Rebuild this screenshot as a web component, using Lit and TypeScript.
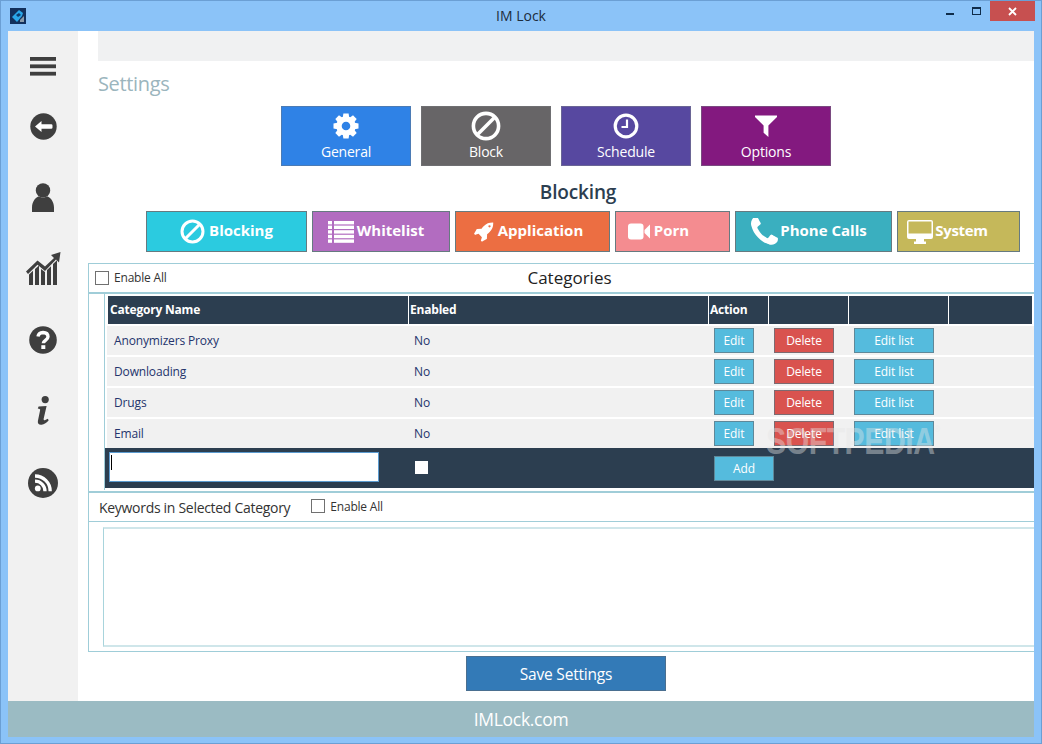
import { LitElement, html, css, svg } from "lit";
import { customElement } from "lit/decorators.js";

const ROCKET = "M1504 448q0-40-28-68t-68-28-68 28-28 68 28 68 68 28 68-28 28-68zm224-288q0 249-75.5 430.5t-253.5 360.5q-81 80-195 176l-20 379q-2 16-16 26l-384 224q-7 4-16 4-12 0-23-9l-64-64q-13-14-8-32l85-276-281-281-276 85q-3 1-9 1-14 0-23-9l-64-64q-17-19-5-39l224-384q10-14 26-16l379-20q96-114 176-195 188-187 358-258t431-71q14 0 24 9.5t10 22.5z";
const PHONE = "M1600 1240q0 27-10 70.5t-21 68.5q-21 50-122 106-94 51-186 51-27 0-53-3.5t-57.5-12.5-47-14.5-55.5-20.5-49-18q-98-35-175-83-127-79-264-216t-216-264q-48-77-83-175-3-9-18-49t-20.5-55.5-14.5-47-12.5-57.5-3.5-53q0-92 51-186 56-101 106-122 25-11 68.5-21t70.5-10q14 0 21 3 18 6 53 76 11 19 30 54t35 63.5 31 53.5q3 4 17.5 25t21.5 35.5 7 28.5q0 20-28.5 50t-62 55-62 53-28.5 46q0 9 5 22.5t8.5 20.5 14 24 11.5 19q76 137 174 235t235 174q2 1 19 11.5t24 14 20.5 8.5 22.5 5q18 0 46-28.5t53-62 55-62 50-28.5q14 0 28.5 7t35.5 21.5 25 17.5q25 15 53.5 31t63.5 35 54 30q70 35 76 53 3 7 3 21z";

const gear = (s: number) => html`<svg width=${s} height=${s} viewBox="0 0 26 26">
  ${[0, 45, 90, 135, 180, 225, 270, 315].map((a) => svg`<path d="M10.4 0.5h5.2l.8 5h-6.8z" fill="#fff" transform="rotate(${a} 13 13)"/>`)}
  <circle cx="13" cy="13" r="7" fill="none" stroke="#fff" stroke-width="5.4"/></svg>`;
const ban = (s: number) => html`<svg width=${s} height=${s} viewBox="0 0 30 30" fill="none" stroke="#fff" stroke-width="3.6">
  <circle cx="15" cy="15" r="12.6"/><path d="M6 24L24 6"/></svg>`;
const clock = (s: number) => html`<svg width=${s} height=${s} viewBox="0 0 26 26" fill="none" stroke="#fff">
  <circle cx="13" cy="13" r="10.8" stroke-width="3.2"/><path d="M14 6.5V14H8.5" stroke-width="2.2"/></svg>`;
const filter = (s: number) => html`<svg width=${s} height=${s} viewBox="0 0 24 24"><path fill="#fff" d="M1 1.5h22v1.5l-8.6 8.6V23l-4.8-4.2v-7.2L1 3z"/></svg>`;
const list = html`<svg width="26" height="22" viewBox="0 0 26 22" fill="#fff">
  ${[0, 4.6, 9.2, 13.8, 18.4].map((y) => svg`<rect x="0" y=${y} width="4" height="3.4"/><rect x="6" y=${y} width="20" height="3.4"/>`)}</svg>`;
const rocket = html`<svg width="21" height="21" viewBox="0 0 1792 1792"><path fill="#fff" d=${ROCKET}/></svg>`;
const video = html`<svg width="22" height="17" viewBox="0 0 22 17" fill="#fff"><rect x="0" y="0.5" width="15.5" height="16" rx="3"/><path d="M16.5 7L22 1.5v14L16.5 10z"/></svg>`;
const phone = html`<svg width="27" height="28" viewBox="192 192 1408 1408" preserveAspectRatio="none"><path fill="#fff" d=${PHONE}/></svg>`;
const desktop = html`<svg width="26" height="24" viewBox="0 0 26 24" fill="#fff">
  <path fill-rule="evenodd" d="M2 0h22a2 2 0 0 1 2 2v15a2 2 0 0 1-2 2H2a2 2 0 0 1-2-2V2a2 2 0 0 1 2-2zM1.5 1.5v12h23v-12z"/><path d="M9 19h8v2.6h2V24H7v-2.4h2z"/></svg>`;

const DARK = "#3f3f3f";
const sideIcons = [
  html`<svg width="26" height="19" viewBox="0 0 26 19" fill=${DARK}><rect width="26" height="3.8"/><rect y="7.4" width="26" height="3.8"/><rect y="14.8" width="26" height="3.8"/></svg>`,
  html`<svg width="27" height="27" viewBox="0 0 27 27"><circle cx="13.5" cy="13.5" r="13.2" fill=${DARK}/><path fill="#fff" d="M5 13.5l6.5-5.6v3.4h9.7q1.3 0 1.3 1.2v2q0 1.2-1.3 1.2h-9.7v3.4z"/></svg>`,
  html`<svg width="22" height="29" viewBox="0 0 22 29" fill=${DARK}><circle cx="11" cy="7.4" r="7.2"/><path d="M0 29v-4.5C0 18 4 14.2 7 13.2q4 2.6 8 0c3 1 7 4.8 7 11.3V29z"/></svg>`,
  html`<svg width="35" height="33" viewBox="0 0 35 33" fill=${DARK}><path d="M0 19.5L11.5 8.5l7.5 6L28 6l-3-3 9.5-3-1.5 10.5-3-3L19 19l-7.5-6.3L2 22z"/><path d="M3 33V22.5l4-3.7V33zM9 33V17l4-3.6V33zM15 33V17l4 3 0 13zM21 33V18l4-3.7V33zM27 33V12l4-3.8V33z"/></svg>`,
  html`<svg width="28" height="28" viewBox="0 0 28 28"><circle cx="14" cy="14" r="13.8" fill=${DARK}/><path d="M9 10.6q.6-4 5-4.1 5 .2 5 4.2c0 3.6-4.7 3.7-4.7 6.6" fill="none" stroke="#fff" stroke-width="3.4"/><rect x="12.3" y="19.2" width="4" height="3.8" fill="#fff"/></svg>`,
  html`<svg width="13" height="29" viewBox="0 0 13 29" fill=${DARK}><circle cx="8.2" cy="3.6" r="3.6"/><path d="M1.6 10.5l8-.6-3 13.2q0 1.5 1.2 1.2l3-1.6.9 1.6q-3 3.8-7.2 4.4-4.2.3-3.6-3.6l2.3-11.4q0-1-2.4-1.2z"/></svg>`,
  html`<svg width="30" height="30" viewBox="0 0 30 30"><circle cx="15" cy="15" r="15" fill=${DARK}/><circle cx="9.8" cy="20.4" r="2.9" fill="#fff"/><path d="M7 13.2a10 10 0 0 1 10 10M7 8a15.2 15.2 0 0 1 15.2 15.2" fill="none" stroke="#fff" stroke-width="3.3"/></svg>`,
];

const navs = [
  { c: "general", label: "General", icon: gear(26) },
  { c: "block", label: "Block", icon: ban(30) },
  { c: "schedule", label: "Schedule", icon: clock(26) },
  { c: "options", label: "Options", icon: filter(24) },
];
const tabs = [
  { c: "t1", label: "Blocking", icon: ban(25) },
  { c: "t2", label: "Whitelist", icon: list },
  { c: "t3", label: "Application", icon: rocket },
  { c: "t4", label: "Porn", icon: video },
  { c: "t5", label: "Phone Calls", icon: phone },
  { c: "t6", label: "System", icon: desktop },
];
const cats = ["Anonymizers Proxy", "Downloading", "Drugs", "Email"];

@customElement("app-root")
export class AppRoot extends LitElement {
  static styles = css`
    :host {
      display: flex;
      flex-direction: column;
      position: relative;
      width: 1042px;
      height: 744px;
      box-sizing: border-box;
      border: 1px solid #6b9fd4;
      background: #8bc3f8;
      font-family: "Open Sans", "Noto Sans", "Liberation Sans", sans-serif;
      overflow: hidden;
    }
    .title {
      height: 29px;
      flex: none;
      display: grid;
      grid-template-columns: 1fr auto 1fr;
      align-items: center;
      font-size: 14px;
      color: #1c2c3c;
    }
    .logo { margin-left: 9px; display: block; }
    .controls { justify-self: end; display: flex; align-self: start; margin-right: 6px; }
    .min { width: 8px; height: 2px; background: #0f2c4a; margin: 12px 0 0 0; }
    .max { width: 7px; height: 5px; border: 1px solid #0f2c4a; border-top-width: 2px; margin: 6px 0 0 18px; }
    .close { width: 45px; height: 20px; background: #c75050; margin-left: 9px; display: flex; align-items: center; justify-content: center; }
    .frame {
      height: 706px;
      margin: 1px 7px 0 7px;
      display: flex;
      background: #fff;
    }
    .side { width: 70px; flex: none; background: #f1f1f1; display: flex; flex-direction: column; }
    .si { height: 71px; flex: none; display: flex; align-items: center; justify-content: center; box-sizing: border-box; }
    .si:first-child { height: 60px; padding-top: 10px; }
    .si:last-child { margin-top: 1px; }
    .main { flex: 1; display: flex; flex-direction: column; min-width: 0; }
    .band { height: 30px; margin-left: 20px; background: #f0f1f2; flex: none; }
    .settings { height: 45px; padding-left: 20px; font-size: 20px; line-height: 46px; color: #9bb5bd; flex: none; box-sizing: border-box; letter-spacing: -0.35px; }
    .navs { display: flex; justify-content: center; gap: 10px; flex: none; }
    .nav {
      width: 130px; height: 60px; box-sizing: border-box; border: 1px solid #5f7486; color: #fff;
      display: flex; flex-direction: column; align-items: center; font-size: 14px; letter-spacing: -0.2px;
    }
    .nav .ic { height: 36px; flex: none; display: flex; align-items: center; justify-content: center; margin-top: 1px; }
    .nav .lb { line-height: 18px; margin-top: -1.5px; }
    .general { background: #2f82e6; border-color: #4b7bb5; }
    .block { background: #676567; border-color: #6f6f72; }
    .schedule { background: #5748a0; border-color: #6a6595; }
    .options { background: #83197f; border-color: #7a4a80; }
    .heading { height: 45px; flex: none; box-sizing: border-box; padding: 14px 0 0 44px; text-align: center; font-size: 19px; line-height: 24px; font-weight: 600; color: #2c3e50; letter-spacing: -0.15px; }
    .tabs { display: flex; gap: 5px; margin-left: 68px; flex: none; }
    .tab {
      height: 41px; box-sizing: border-box; border: 1px solid #667a80; color: #fff; font-weight: 700; font-size: 15px;
      display: flex; align-items: center; justify-content: center; gap: 3px;
    }
    .tab span { padding-bottom: 4px; }
    .tab svg { flex: none; }
    .t1 { width: 161px; background: #2bcbe0; gap: 4px; }
    .t2 { width: 138px; background: #b26cc0; padding-right: 10px; }
    .t3 { width: 155px; background: #ec6e42; padding-right: 9px; gap: 4px; }
    .t4 { width: 115px; background: #f48c90; padding-right: 28px; gap: 4px; }
    .t5 { width: 157px; background: #3aafbf; padding-right: 9px; gap: 2px; }
    .t6 { width: 123px; background: #c5b85a; padding-right: 22px; gap: 2px; letter-spacing: -0.3px; }
    .panel {
      margin: 11px 0 0 10px;
      height: 389px;
      box-sizing: border-box;
      border: 1px solid #9fcdd8;
      border-right: 0;
      display: flex;
      flex-direction: column;
      flex: none;
    }
    .cathead { height: 28px; flex: none; border-bottom: 2px solid #a0cdd8; position: relative; display: flex; align-items: center; justify-content: center; font-size: 17px; color: #222; padding-left: 16px; }
    .cathead span { padding-bottom: 2px; }
    .cathead .en { position: absolute; left: 6px; top: 5px; }
    .en { display: flex; align-items: center; gap: 5px; font-size: 12px; color: #333; letter-spacing: -0.2px; }
    .en input { appearance: none; margin: 0; width: 14px; height: 14px; box-sizing: border-box; border: 1px solid #707070; background: #fff; }
    .tablewrap { margin-left: 15px; height: 196px; box-sizing: border-box; border-left: 1px solid #9fcdd8; flex: none; display: flex; flex-direction: column; }
    .thead, .row { display: grid; grid-template-columns: 301px 300px 60px 80px 100px 1fr; }
    .thead { margin: 2px 2px 0 3px; height: 28px; background: #2c3e50; color: #fff; font-size: 12px; font-weight: 700; letter-spacing: -0.2px; flex: none; }
    .thead div { display: flex; align-items: center; padding: 0 0 2px 1px; border-right: 1px solid #fff; }
    .thead div:first-child { padding-left: 2px; }
    .thead div:last-child { border-right: 0; }
    .row { height: 29px; flex: none; margin: 2px 0 0 2px; background: #f1f1f1; font-size: 12px; color: #24346c; align-items: center; letter-spacing: -0.15px; }
    .row .name { padding-left: 7px; }
    .row .no { padding-left: 6px; }
    .btn { box-sizing: border-box; height: 25px; border: 1px solid #5f8899; background: #55bbdd; color: #fff; font-size: 12px; display: flex; align-items: center; justify-content: center; margin-left: 6px; letter-spacing: -0.1px; }
    .btn.edit { width: 40px; }
    .btn.del { width: 60px; background: #d9534f; border-color: #7c6a70; }
    .btn.lst { width: 80px; }
    .btn.add { width: 60px; margin-left: 4px; }
    .addrow { height: 40px; background: #2c3e50; display: grid; grid-template-columns: 310px 295px 1fr; align-items: center; flex: none; }
    .inwrap { position: relative; margin: 0 0 2px 4px; width: 270px; height: 30px; }
    .inwrap input { width: 100%; height: 100%; box-sizing: border-box; border: 1px solid #5b9bd0; background: #fff; margin: 0; padding: 0; display: block; }
    .caret { position: absolute; left: 2px; top: 3px; width: 1px; height: 15px; background: #000; }
    .addchk { appearance: none; margin: 0 0 2px; width: 13px; height: 13px; background: #fff; border: 0; display: block; }
    .sep { height: 2px; margin-top: 1px; background: #a0cdd8; flex: none; }
    .kw { height: 28px; flex: none; border-bottom: 1px solid #a0cdd8; display: flex; align-items: center; padding-left: 10px; font-size: 14px; color: #333; letter-spacing: -0.3px; }
    .kw .en { margin: -2px 0 0 21px; letter-spacing: -0.2px; }
    .kwbox { margin: 5px 0 0 14px; height: 120px; flex: none; box-sizing: border-box; border: 1px solid #a8d4dc; border-top: 2px solid #cfe6ea; border-bottom: 2px solid #cfe6ea; border-right: 0; background: #fff; }
    .savewrap { display: flex; justify-content: center; margin-top: 4px; padding-left: 20px; flex: none; }
    .save { width: 200px; height: 35px; box-sizing: border-box; background: #337ab7; border: 1px solid #4a6f90; color: #fff; font-size: 15.5px; display: flex; align-items: center; justify-content: center; letter-spacing: -0.2px; }
    .foot { position: absolute; left: 7px; right: 7px; top: 700px; height: 36px; background: #9bbbc3; color: #fff; font-size: 17.5px; display: flex; align-items: center; justify-content: center; letter-spacing: -0.3px; }
    .wm { position: absolute; left: 765px; top: 421px; color: rgba(230, 230, 230, 0.42); font-family: "Liberation Sans", sans-serif; font-weight: 700; font-size: 36px; line-height: 40px; letter-spacing: -0.6px; transform: scaleX(0.84); transform-origin: left top; white-space: nowrap; pointer-events: none; }
    .wm sup { font-size: 9px; font-weight: 400; vertical-align: 22px; line-height: 0; }
  `;

  render() {
    return html`
      <div class="title">
        <svg class="logo" width="16" height="16" viewBox="0 0 16 16">
          <rect width="16" height="16" fill="#12305c"/>
          <path d="M2 9l7-7 4 3-1 3-5 6z" fill="#2aa6e8"/>
          <path d="M6 7l3-2 2 2-3 2z" fill="#0d3c6e"/>
          <path d="M10 12l4-4v6h-4z" fill="#8a9aa8"/>
        </svg>
        <span>IM Lock</span>
        <div class="controls">
          <div class="min"></div>
          <div class="max"></div>
          <div class="close">
            <svg width="9" height="9" viewBox="0 0 9 9"><path d="M1 1l7 7M8 1L1 8" stroke="#fff" stroke-width="1.8"/></svg>
          </div>
        </div>
      </div>
      <div class="frame">
        <div class="side">${sideIcons.map((i) => html`<div class="si">${i}</div>`)}</div>
        <div class="main">
          <div class="band"></div>
          <div class="settings">Settings</div>
          <div class="navs">
            ${navs.map((n) => html`<div class="nav ${n.c}"><div class="ic">${n.icon}</div><div class="lb">${n.label}</div></div>`)}
          </div>
          <div class="heading">Blocking</div>
          <div class="tabs">
            ${tabs.map((t) => html`<div class="tab ${t.c}">${t.icon}<span>${t.label}</span></div>`)}
          </div>
          <div class="panel">
            <div class="cathead">
              <label class="en"><input type="checkbox" />Enable All</label>
              <span>Categories</span>
            </div>
            <div class="tablewrap">
              <div class="thead">
                <div>Category Name</div><div>Enabled</div><div>Action</div><div></div><div></div><div></div>
              </div>
              ${cats.map(
                (c) => html`<div class="row">
                  <div class="name">${c}</div>
                  <div class="no">No</div>
                  <div><div class="btn edit">Edit</div></div>
                  <div><div class="btn del">Delete</div></div>
                  <div><div class="btn lst">Edit list</div></div>
                  <div></div>
                </div>`,
              )}
              <div class="addrow">
                <div class="inwrap"><input type="text" /><span class="caret"></span></div>
                <div><input class="addchk" type="checkbox" /></div>
                <div><div class="btn add">Add</div></div>
              </div>
            </div>
            <div class="sep"></div>
            <div class="kw">
              <span>Keywords in Selected Category</span>
              <label class="en"><input type="checkbox" />Enable All</label>
            </div>
            <div class="kwbox"></div>
          </div>
          <div class="savewrap"><div class="save">Save Settings</div></div>
        </div>
      </div>
      <div class="foot">IMLock.com</div>
      <div class="wm">SOFTPEDIA<sup>®</sup></div>
    `;
  }
}
